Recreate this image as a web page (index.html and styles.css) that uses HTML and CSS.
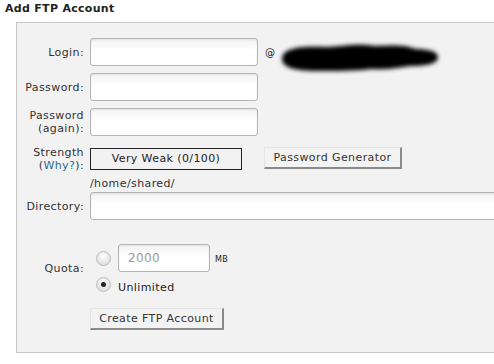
FILE: index.html
```html
<!DOCTYPE html>
<html>
<head>
<meta charset="utf-8">
<link rel="stylesheet" href="styles.css">
</head>
<body>
<h2 class="title">Add FTP Account</h2>
<div class="panel">
  <div class="form">
    <label class="lbl gap7">Login:</label>
    <div class="field gap7">
      <input class="text short" type="text">
      <span class="at">@</span>
      <svg class="blob" width="170" height="28" viewBox="0 2 170 28">
        <defs><filter id="bl" x="-10%" y="-30%" width="120%" height="160%"><feGaussianBlur stdDeviation="2.2"/></filter></defs>
        <path filter="url(#bl)" fill="#000" d="M6 20 C6 8 28 7 50 8 C70 7 80 4 100 7 C120 6 130 6 140 10 C150 10 162 12 162 18 C162 25 150 27 135 27 C120 29 110 31 95 30 C80 32 60 32 40 32 C18 32 6 28 6 20 Z"/>
      </svg>
    </div>

    <label class="lbl gap7">Password:</label>
    <div class="field gap7"><input class="text short" type="password"></div>

    <label class="lbl gap7">Password<br>(again):</label>
    <div class="field gap7"><input class="text short" type="password"></div>

    <label class="lbl">Strength<br>(<a class="why">Why?</a>):</label>
    <div class="field strength-field">
      <div class="meter">Very Weak (0/100)</div>
      <button class="btn gen">Password Generator</button>
    </div>

    <span class="spacer"></span>
    <div class="path">/home/shared/</div>
    <label class="lbl gap24">Directory:</label>
    <div class="field gap24"><input class="text long" type="text"></div>

    <label class="lbl">Quota:</label>
    <div class="quota">
      <div class="qrow">
        <span class="radio"></span>
        <input class="text quota-in" type="text" value="2000">
        <span class="mb">MB</span>
      </div>
      <div class="qrow qrow2">
        <span class="radio checked"></span>
        <span class="unl">Unlimited</span>
      </div>
    </div>

    <span class="spacer"></span>
    <div class="field submit-row"><button class="btn create">Create FTP Account</button></div>
  </div>
</div>
</body>
</html>
```

FILE: styles.css
```css
html, body {
  margin: 0;
  padding: 0;
  overflow: hidden;
  background: #fff;
}
body {
  font-family: "DejaVu Sans", Verdana, sans-serif;
  font-size: 11px;
  letter-spacing: 0.4px;
  color: #333;
  width: 494px;
  height: 364px;
}
.title {
  margin: 0;
  padding: 2px 0 0 5px;
  font-size: 11px;
  letter-spacing: 0.3px;
  line-height: 14px;
  font-weight: bold;
  color: #222;
  height: 20px;
  box-sizing: border-box;
}
.panel {
  margin-left: 16px;
  margin-top: 2px;
  width: 620px;
  border: 1px solid #c8c8c8;
  background: #f2f2f2;
  padding: 15px 0 22px 0;
  box-sizing: border-box;
}
.form {
  display: grid;
  grid-template-columns: 67px 1fr;
  column-gap: 6px;
  align-items: center;
}
.lbl {
  text-align: right;
  line-height: 13px;
  color: #333;
}
.field {
  display: flex;
  align-items: center;
  height: 28px;
}
.gap7 { margin-bottom: 7px; }
.gap24 { margin-bottom: 24px; }
.text {
  height: 28px;
  box-sizing: border-box;
  border: 1px solid #b4b4b4;
  border-radius: 3px;
  background: linear-gradient(#f3f3f3, #ffffff 45%);
  box-shadow: inset 0 1px 2px rgba(0,0,0,0.08);
  font-family: "DejaVu Sans", sans-serif;
  font-size: 11px;
  padding: 0 8px;
  margin: 0;
  outline: none;
}
.short { width: 168px; }
.long { width: 420px; }
.at {
  margin-left: 7px;
  font-size: 10px;
  letter-spacing: 0;
  color: #222;
}
.blob {
  margin-left: 1px;
  overflow: visible;
  position: relative;
  top: 3px;
}
.strength-field {
  height: 32px;
}
.why {
  color: #2a6c8a;
  text-decoration: none;
}
.meter {
  width: 152px;
  height: 22px;
  box-sizing: border-box;
  border: 1px solid #222;
  text-align: center;
  line-height: 20px;
  color: #222;
}
.btn {
  font-family: "DejaVu Sans", sans-serif;
  font-size: 11px;
  letter-spacing: 0.4px;
  color: #333;
  background: #f3f3f3;
  border-style: solid;
  border-width: 1px 2px 2px 1px;
  border-color: #e6e6e6 #8a8a8a #8a8a8a #e6e6e6;
  height: 22px;
  padding: 0 6px;
  margin: 0;
  line-height: 18px;
  white-space: nowrap;
}
.gen {
  margin-left: 22px;
  width: 138px;
  margin-top: -2px;
}
.spacer { height: 1px; }
.path {
  margin-top: 1px;
  line-height: 16px;
  height: 16px;
  color: #333;
}
.quota {
  display: flex;
  flex-direction: column;
  height: 48px;
}
.qrow {
  display: flex;
  align-items: center;
  height: 28px;
}
.radio {
  width: 15px;
  height: 15px;
  box-sizing: border-box;
  border-radius: 50%;
  border: 1px solid #bdbdbd;
  background: radial-gradient(circle at 50% 35%, #ffffff, #e0e0e0 70%);
  margin-left: 6px;
  margin-right: 7px;
  position: relative;
  flex: none;
}
.radio.checked::after {
  content: "";
  position: absolute;
  width: 5px;
  height: 5px;
  border-radius: 50%;
  background: #222;
  left: 4px;
  top: 4px;
}
.quota-in {
  width: 92px;
  color: #9a9a9a;
  padding-left: 9px;
  font-size: 12px;
  letter-spacing: 0.4px;
}
.mb {
  margin-left: 5px;
  font-size: 8px;
  margin-top: 2px;
  color: #222;
}
.qrow2 {
  height: 20px;
  align-items: flex-start;
}
.qrow2 .radio {
  margin-top: 5px;
}
.unl {
  margin-top: 9px;
  line-height: 13px;
  color: #222;
}
.submit-row {
  margin-top: 16px;
  height: 22px;
}
.create { width: 134px; }
```
